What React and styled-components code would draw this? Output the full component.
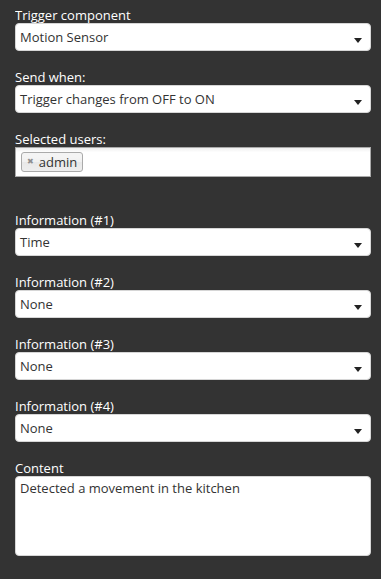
import React from "react";
import styled, { createGlobalStyle } from "styled-components";

const Global = createGlobalStyle`
  html, body { background: #333333; }
  body { margin: 8px 10px 8px 15px; font-family: "Open Sans", "Noto Sans", sans-serif; font-size: 13px; }
`;

const Form = styled.div`
  display: flex;
  flex-direction: column;
  width: 356px;
`;

const Field = styled.div`
  display: flex;
  flex-direction: column;
  margin-bottom: ${(p) => p.$gap || 19}px;
`;

const Label = styled.div`
  color: #ffffff;
  height: 15px;
  line-height: 15px;
  white-space: nowrap;
`;

const Select = styled.div`
  box-sizing: border-box;
  height: 28px;
  background: #ffffff;
  border: 1px solid #d6d6d6;
  border-radius: 4px;
  display: flex;
  align-items: center;
  justify-content: space-between;
  padding: 0 8px 0 4px;
  color: #333333;
`;

const Value = styled.span`
  line-height: 18px;
  margin-top: -1px;
`;

const Arrow = styled.span`
  width: 0;
  height: 0;
  border-left: 4px solid transparent;
  border-right: 4px solid transparent;
  border-top: 5px solid #222222;
  margin-top: 6px;
`;

const MultiBox = styled.div`
  box-sizing: border-box;
  height: 30px;
  border: 1px solid #aaaaaa;
  background: linear-gradient(to bottom, #eeeeee 0%, #ffffff 15%);
  display: flex;
  align-items: center;
  padding: 0 5px;
`;

const Tag = styled.span`
  box-sizing: border-box;
  height: 20px;
  display: inline-flex;
  align-items: center;
  gap: 5px;
  padding: 0 5px 0 5px;
  border: 1px solid #aaaaaa;
  border-radius: 3px;
  background: linear-gradient(to bottom, #f4f4f4 20%, #f0f0f0 50%, #e8e8e8 52%, #eeeeee 100%);
  color: #333333;
  line-height: 18px;
`;

const Remove = styled.span`
  color: #8f8f8f;
  font-size: 8px;
  line-height: 10px;
  font-family: "DejaVu Sans", sans-serif;
`;

const TextArea = styled.div`
  box-sizing: border-box;
  height: 80px;
  background: #ffffff;
  border: 1px solid #d6d6d6;
  border-radius: 4px;
  padding: 2px 4px;
  color: #333333;
  line-height: 18px;
`;

const SelectField = ({ label, value }) => (
  <Field>
    <Label>{label}</Label>
    <Select>
      <Value>{value}</Value>
      <Arrow />
    </Select>
  </Field>
);

export default function App() {
  return (
    <>
      <Global />
      <Form>
        <SelectField label="Trigger component" value="Motion Sensor" />
        <SelectField label="Send when:" value="Trigger changes from OFF to ON" />
        <Field $gap={36}>
          <Label>Selected users:</Label>
          <MultiBox>
            <Tag>
              <Remove>✖</Remove>
              <span>admin</span>
            </Tag>
          </MultiBox>
        </Field>
        <SelectField label="Information (#1)" value="Time" />
        <SelectField label="Information (#2)" value="None" />
        <SelectField label="Information (#3)" value="None" />
        <SelectField label="Information (#4)" value="None" />
        <Field>
          <Label>Content</Label>
          <TextArea>Detected a movement in the kitchen</TextArea>
        </Field>
      </Form>
    </>
  );
}
